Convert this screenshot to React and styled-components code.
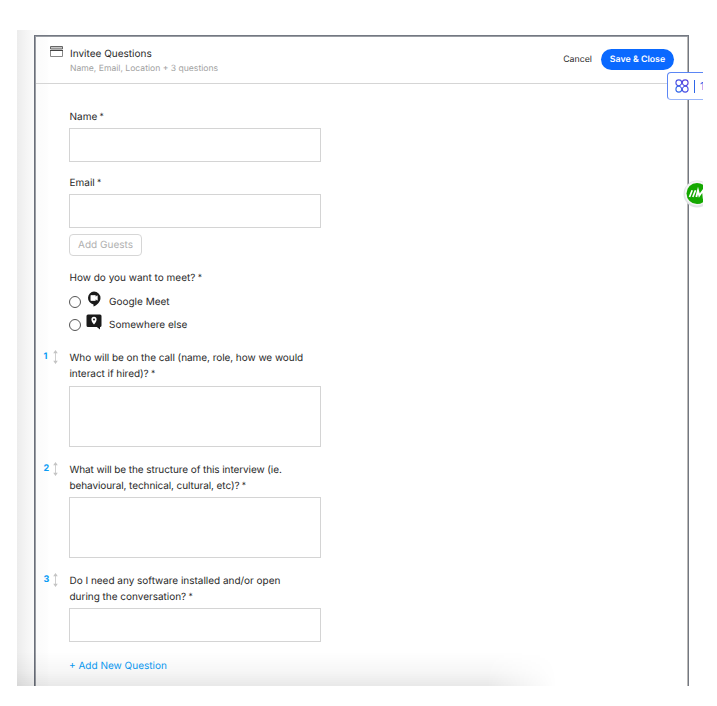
import React from "react";
import styled, { createGlobalStyle } from "styled-components";

const GlobalStyle = createGlobalStyle`
  * { box-sizing: border-box; }
  body {
    margin: 0;
    background: #fff;
    font-family: Inter, "Open Sans", sans-serif;
    color: #2a2a2a;
    text-rendering: geometricPrecision;
  }
  button { font-family: inherit; cursor: pointer; text-rendering: inherit; }
`;

const Page = styled.main`
  width: 717px;
  height: 706px;
  padding: 30px 14px 20px 17px;
  overflow: hidden;
`;

const Viewport = styled.div`
  position: relative;
  height: 656px;
  padding: 5px 14px 0 17px;
  overflow: hidden;
  background: linear-gradient(to right, #ececec 0, #f5f5f5 10px, #fbfbfb 18px, #fdfdfd 30px, #fff 32px);
`;

const Panel = styled.section`
  height: 660px;
  border: 1px solid #737882;
  border-left-color: #6a6f7a;
  box-shadow: inset 1px 1px 0 #9a9da3, inset -1px 0 0 #b9b7b5;
  padding: 1px;
`;

const Header = styled.header`
  display: flex;
  align-items: flex-start;
  height: 47px;
  padding: 7px 13px 0 14px;
  border-bottom: 1px solid #d5d5d5;
`;

const HeaderIcon = styled.svg`
  flex: none;
  width: 13px;
  height: 12px;
  margin: 2px 7px 0 0;
`;

const Titles = styled.div`
  flex: 1;
  padding-top: 2px;
`;

const Title = styled.h1`
  margin: 0;
  font-size: 10px;
  font-weight: 400;
  line-height: 16px;
`;

const Subtitle = styled.p`
  margin: 0;
  font-size: 8.6px;
  line-height: 14px;
  color: #a2a2a2;
`;

const Cancel = styled.button`
  margin: 7px 9px 0 0;
  padding: 0;
  border: 0;
  background: none;
  font-size: 8.8px;
  line-height: 18px;
  color: #2a2a2a;
`;

const Save = styled.button`
  width: 73px;
  height: 21px;
  margin-top: 5px;
  padding: 0;
  border: 0;
  border-radius: 11px;
  background: #0a69ff;
  color: #fff;
  font-size: 8.8px;
  font-weight: 600;
  line-height: 20px;
  white-space: nowrap;
`;

const Form = styled.div`
  display: flex;
  flex-direction: column;
  width: 285px;
  padding-top: 25px;
`;

const Field = styled.div`
  display: grid;
  grid-template-columns: 33px 252px;
  height: ${(p) => p.$height}px;
`;

const Body = styled.div`
  grid-column: 2;
`;

const Label = styled.label`
  display: block;
  height: ${(p) => p.$height || 19}px;
  padding: ${(p) => p.$drop || 0}px 0 0 0.5px;
  font-size: 10px;
  line-height: 16px;
  letter-spacing: ${(p) => p.$tracking || 0}px;
  white-space: pre;
`;

const Line = styled.span`
  display: block;
  height: 16px;
`;

const Star = styled.span`
  margin-left: -0.5px;
  font-size: 8.5px;
  line-height: 1;
  vertical-align: 1.4px;
`;

const Input = styled.input`
  display: block;
  width: 252px;
  height: 34px;
  padding: 0 8px;
  border: 1px solid #d4d4d4;
  background: #fff;
`;

const TextArea = styled.textarea`
  display: block;
  width: 252px;
  height: 61px;
  padding: 8px;
  border: 1px solid #d4d4d4;
  background: #fff;
  resize: none;
`;

const Guests = styled.button`
  display: block;
  width: 73px;
  height: 22px;
  margin-top: 6px;
  padding: 0;
  border: 1px solid #d6d6d6;
  border-radius: 4px;
  background: #fff;
  color: #b0b0b0;
  font-size: 10px;
  line-height: 20px;
`;

const Option = styled.label`
  display: flex;
  align-items: center;
  height: 23px;
  font-size: 10px;
`;

const OptionText = styled.span`
  padding-top: 2px;
`;

const Radio = styled.input`
  appearance: none;
  flex: none;
  width: 12px;
  height: 12px;
  margin: 2px 5px 0 0;
  border: 1px solid #555;
  border-radius: 50%;
`;

const OptionIcon = styled.svg`
  flex: none;
  width: 16px;
  height: 16px;
  margin: -3px 7px 0 0;
`;

const Handle = styled.div`
  display: flex;
  align-items: flex-start;
  padding-left: 7.5px;
  color: #0a9cf5;
  font-size: 9px;
  font-weight: 700;
  line-height: 16px;
`;

const Num = styled.span`
  width: 8.5px;
`;

const MoveIcon = styled.svg`
  flex: none;
  width: 7px;
  height: 16px;
`;

const AddQuestion = styled.button`
  align-self: flex-start;
  margin: 1px 0 0 33px;
  padding: 0;
  border: 0;
  background: none;
  color: #0a9cf5;
  font-size: 10px;
  line-height: 16px;
  white-space: nowrap;
`;

const BottomShade = styled.div`
  position: absolute;
  left: 0;
  bottom: 0;
  width: 560px;
  height: 34px;
  background: linear-gradient(to top, rgba(0, 0, 0, 0.09), rgba(0, 0, 0, 0.035) 14px, transparent);
  mask-image: linear-gradient(to right, #000 470px, transparent 540px);
  pointer-events: none;
`;

const Extension = styled.div`
  position: absolute;
  top: 42px;
  left: 650px;
  display: flex;
  align-items: center;
  width: 60px;
  height: 28px;
  padding-left: 7px;
  border: 1px solid #5b86f5;
  border-bottom-color: #9bb7fa;
  border-radius: 4px;
  background: #fff;
  color: #2f66e8;
  font-size: 11px;
`;

const ExtensionIcon = styled.svg`
  width: 14px;
  height: 14px;
`;

const Separator = styled.span`
  width: 1px;
  height: 13px;
  margin: 0 5px 0 5px;
  background: #2f66e8;
`;

const Badge = styled.svg`
  position: absolute;
  top: 149px;
  left: 665px;
  width: 30px;
  height: 30px;
`;

const questions = [
  {
    first: "Who will be on the call (name, role, how we would",
    second: "interact if hired)?",
    long: true,
    height: 112,
    label: 37,
    tracking: -0.05,
  },
  {
    first: "What will be the structure of this interview (ie.",
    second: "behavioural, technical, cultural, etc)?",
    long: true,
    height: 111,
    label: 36,
    tracking: -0.09,
  },
  {
    first: "Do I need any software installed and/or open",
    second: "during the conversation?",
    long: false,
    height: 85,
    label: 36,
    tracking: -0.02,
  },
];

function Question({ index, q }) {
  return (
    <Field $height={q.height}>
      <Handle>
        <Num>{index}</Num>
        <MoveIcon viewBox="0 0 7 16" fill="none" stroke="#cfcfcf">
          <path d="M3.5 2V14" />
          <path d="M1.2 4.2L3.5 1L5.8 4.2ZM1.2 11.8L3.5 15L5.8 11.8Z" fill="#c4c4c4" stroke="none" />
        </MoveIcon>
      </Handle>
      <Body>
        <Label $height={q.label} $tracking={q.tracking} $drop={1}>
          <Line>{q.first}</Line>
          <Line>{q.second} <Star>*</Star></Line>
        </Label>
        {q.long ? <TextArea /> : <Input />}
      </Body>
    </Field>
  );
}

export default function App() {
  return (
    <Page>
      <GlobalStyle />
      <Viewport>
        <Panel>
          <Header>
            <HeaderIcon viewBox="0 0 13 12" fill="none">
              <path d="M.5 .5H12.5V3H.5Z" fill="#c8c8c8" stroke="#666" />
              <path d="M.5 4.5V10.5H12.5V4.5" stroke="#888" />
              <path d="M0 4.5H13" stroke="#444" />
            </HeaderIcon>
            <Titles>
              <Title>Invitee Questions</Title>
              <Subtitle>Name, Email, Location + 3 questions</Subtitle>
            </Titles>
            <Cancel>Cancel</Cancel>
            <Save>Save &amp; Close</Save>
          </Header>
          <Form>
            <Field $height={66}>
              <Body>
                <Label>Name <Star>*</Star></Label>
                <Input />
              </Body>
            </Field>
            <Field $height={95}>
              <Body>
                <Label>Email <Star>*</Star></Label>
                <Input />
                <Guests>Add Guests</Guests>
              </Body>
            </Field>
            <Field $height={79}>
              <Body>
                <Label>How do you want to meet? <Star>*</Star></Label>
                <Option>
                  <Radio type="radio" name="place" />
                  <OptionIcon viewBox="0 0 16 16">
                    <path d="M8 .5A6.5 6.5 0 0 0 7.5 13.4V15.6C11 14.2 14.5 10.8 14.5 7A6.5 6.5 0 0 0 8 .5Z" fill="#1a1a1a" />
                    <path d="M4.9 4.5H9.3V6L11.3 4.8V9.2L9.3 8V9.5H4.9Z" fill="#fff" stroke="#fff" strokeWidth=".7" strokeLinejoin="round" />
                  </OptionIcon>
                  <OptionText>Google Meet</OptionText>
                </Option>
                <Option>
                  <Radio type="radio" name="place" />
                  <OptionIcon viewBox="0 0 16 16">
                    <path d="M2 .5H14A1.5 1.5 0 0 1 15.5 2V11.5A1.5 1.5 0 0 1 14 13V15.6L10.8 13H2A1.5 1.5 0 0 1 .5 11.5V2A1.5 1.5 0 0 1 2 .5Z" fill="#1a1a1a" />
                    <path d="M8 10.5C6.5 8.5 5.4 7.2 5.4 5.4A2.6 2.6 0 0 1 10.6 5.4C10.6 7.2 9.5 8.5 8 10.5Z" fill="#fff" />
                    <circle cx="8" cy="5.4" r="1" fill="#1a1a1a" />
                  </OptionIcon>
                  <OptionText>Somewhere else</OptionText>
                </Option>
              </Body>
            </Field>
            {questions.map((q, i) => (
              <Question key={q.first} index={i + 1} q={q} />
            ))}
            <AddQuestion>+ Add New Question</AddQuestion>
          </Form>
        </Panel>
        <BottomShade />
        <Extension>
          <ExtensionIcon viewBox="0 0 14 14" fill="none" stroke="#5540dc" strokeWidth="1.1">
            <circle cx="3.8" cy="3.8" r="2.9" stroke="#4a50e4" />
            <circle cx="10.2" cy="3.8" r="2.9" />
            <circle cx="3.8" cy="10.2" r="2.9" stroke="#3266e8" />
            <circle cx="10.2" cy="10.2" r="2.9" stroke="#4a50e4" />
            <path d="M7 4.6L9.4 7L7 9.4L4.6 7Z" stroke="#4a50e4" fill="#fff" strokeWidth="1" />
          </ExtensionIcon>
          <Separator />
          1
        </Extension>
        <Badge viewBox="0 0 30 30">
          <circle cx="15" cy="15" r="13.5" fill="#e1e4e6" />
          <circle cx="15" cy="14.2" r="12.2" fill="#f5f5f5" />
          <circle cx="15" cy="14.5" r="10.5" fill="#14a800" />
          <path d="M7.5 18L10.2 11.3M10.8 18L13.5 11.3" fill="none" stroke="#fff" strokeWidth="1.7" />
          <path d="M14.3 18L16 11.5L17.3 16.5L21 11.5L21.5 17L24 13" fill="none" stroke="#fff" strokeWidth="1.9" />
        </Badge>
      </Viewport>
    </Page>
  );
}
